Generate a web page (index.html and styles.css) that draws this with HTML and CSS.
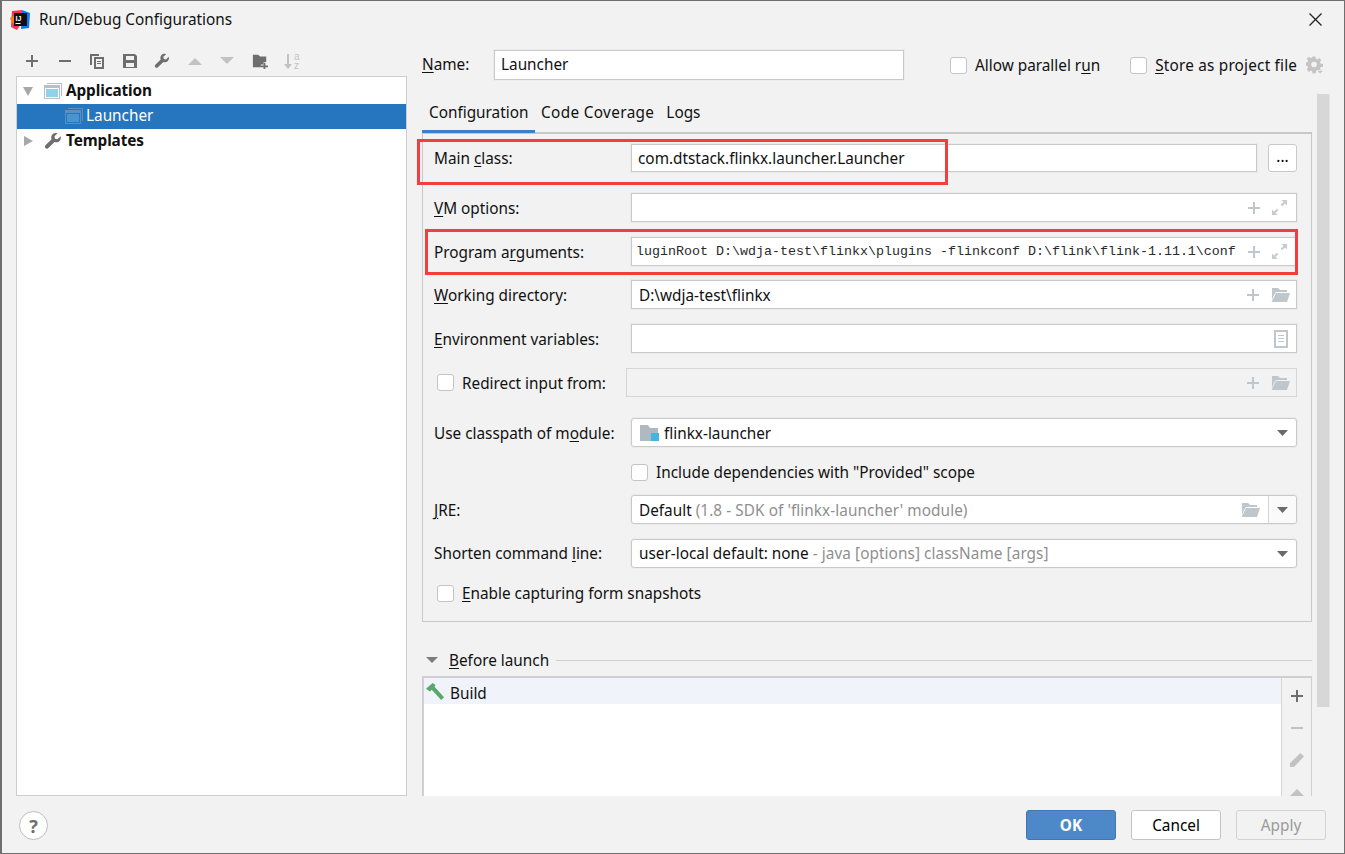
FILE: index.html
```html
<!DOCTYPE html>
<html lang="en">
<head>
<meta charset="utf-8">
<title>Run/Debug Configurations</title>
<link rel="stylesheet" href="styles.css">
</head>
<body>
<svg class="sprite" width="0" height="0" aria-hidden="true">
  <symbol id="i-plus" viewBox="0 0 16 16"><path d="M7 2h2v5h5v2H9v5H7V9H2V7h5z"/></symbol>
  <symbol id="i-minus" viewBox="0 0 16 16"><path d="M2 7h12v2H2z"/></symbol>
  <symbol id="i-expand" viewBox="0 0 18 18"><path d="M11 1h6v6l-2.2-2.2-3 3-1.6-1.6 3-3zM7 17H1v-6l2.2 2.2 3-3 1.6 1.6-3 3z"/></symbol>
  <symbol id="i-folder" viewBox="0 0 20 16"><path d="M2 1h6l2 2h7v2H6L4 8 2 13zM6 6h14l-3 9H1.500z"/></symbol>
  <symbol id="i-wrench" viewBox="0 0 18 18"><path d="M16.600 4.200 13.500 7.200 11 6.800 10.500 4.300 13.600 1.300C11.500.5 9 1.100 7.900 3 7 4.500 7 6 7.600 7.200L1.500 13.300C.7 14.100.7 15.300 1.500 16.100S3.600 16.900 4.400 16.100L10.500 10C12.200 10.700 14.200 10.300 15.600 8.900 16.800 7.700 17.100 5.800 16.600 4.200Z"/></symbol>
  <symbol id="i-window" viewBox="0 0 18 18"><path class="w-back" d="M3 1h15v13h-1V2H3z"/><path class="w-frame" d="M0 3h16v14H0zM1 6v10h14V6z"/><path class="w-fill" d="M2 7h12v8H2z"/></symbol>
</svg>

<div class="dialog">
  <header class="titlebar">
    <svg class="logo" viewBox="0 0 20 20" aria-hidden="true">
      <path fill="#fe315d" d="M2 1 12 0l3 8-8 12-6-3z"/>
      <path fill="#087cfa" d="M12 0l8 3-1 15-8 1z"/>
      <path fill="#f97a12" d="M0 8l5-3 2 10-5-2z"/>
      <rect x="4" y="3" width="13" height="13" fill="#111"/>
      <text x="5.500" y="10.500" class="logo-text">IJ</text>
      <rect x="5.500" y="13" width="5" height="1" fill="#fff"/>
    </svg>
    <span class="title">Run/Debug Configurations</span>
    <svg class="close" viewBox="0 0 13 13" aria-hidden="true"><path d="M.5.500l12 12M12.500.500l-12 12"/></svg>
  </header>

  <main class="main">
    <aside class="left">
      <div class="toolbar">
        <svg class="tool dark"><use href="#i-plus"/></svg>
        <svg class="tool dark"><use href="#i-minus"/></svg>
        <svg class="tool dark" viewBox="0 0 16 16"><path d="M1 1h9v2H3v9H1zM5 4h10v12H5zM7 6v8h6V6zM8 8h4v1H8zM8 10h4v1H8z" fill-rule="evenodd"/></svg>
        <svg class="tool dark" viewBox="0 0 16 16"><path fill-rule="evenodd" d="M1 1h12l2 2v12H1zM4 3v4h8V3zM4 10v4h8v-4z"/></svg>
        <svg class="tool dark"><use href="#i-wrench"/></svg>
        <svg class="tool faint" viewBox="0 0 16 16"><path d="M1 12 8 5l7 7z"/></svg>
        <svg class="tool faint" viewBox="0 0 16 16"><path d="M1 4h14l-7 7z"/></svg>
        <svg class="tool dark" viewBox="0 0 18 18"><path d="M1 2h6l2 2h7v6h-3v3h-3v3H1z"/><path d="M13 11h2v3h3v2h-3v2h-2v-2h-3v-2h3z"/></svg>
        <svg class="tool faint sort" viewBox="0 0 18 18"><path d="M3 2h2v10h3l-4 5-4-5h3z"/><text x="10" y="8" class="sort-text">a</text><text x="10" y="16.500" class="sort-text">z</text></svg>
      </div>
      <div class="tree">
        <div class="node">
          <svg class="twisty" viewBox="0 0 12 12"><path d="M1 2h10L6 11z"/></svg>
          <svg class="node-icon"><use href="#i-window"/></svg>
          <b>Application</b>
        </div>
        <div class="node selected">
          <svg class="node-icon child"><use href="#i-window"/></svg>
          <span>Launcher</span>
        </div>
        <div class="node">
          <svg class="twisty" viewBox="0 0 12 12"><path d="M2 1v10l9-5z"/></svg>
          <svg class="node-icon wrench"><use href="#i-wrench"/></svg>
          <b>Templates</b>
        </div>
      </div>
    </aside>

    <section class="right">
      <div class="name-row">
        <label class="name-label"><u>N</u>ame:</label>
        <div class="field name-field">Launcher</div>
        <span class="check allow"></span><span class="check-text">Allow parallel r<u>u</u>n</span>
        <span class="check store"></span><span class="check-text store-text"><u>S</u>tore as project file</span>
        <svg class="gear" viewBox="0 0 18 18"><path fill-rule="evenodd" d="M7 0h3l.5 2.500 1.500.6L14 1.700l2.200 2.200-1.400 2 .6 1.500 2.600.5v3l-2.600.5-.6 1.500 1 1.500H11.500l-.5.600-1 3H7l-.5-2.500-1.500-.6-2 1.400L.8 13.500l1.400-2-.6-1.500L-.9 9.500v-3l2.500-.5.600-1.500-1.400-2L3 .3l2 1.400 1.500-.6zM8.500 5.500a3 3 0 1 0 0 6 3 3 0 0 0 0-6z"/><path d="M12 15h6l-3 3z"/></svg>
      </div>

      <div class="scroll-area">
        <div class="form-col">
          <nav class="tabs">
            <span class="tab active">Configuration</span>
            <span class="tab coverage">Code Coverage</span>
            <span class="tab">Logs</span>
          </nav>

          <div class="panel">
            <div class="row">
              <label class="lbl">Main <u>c</u>lass:</label>
              <div class="field grow main-field">com.dtstack.flinkx.launcher.Launcher</div>
              <button class="dots">...</button>
            </div>
            <div class="row mt21 tall">
              <label class="lbl"><u>V</u>M options:</label>
              <div class="field grow">
                <span class="spacer"></span>
                <svg class="fi plus"><use href="#i-plus"/></svg>
                <svg class="fi exp"><use href="#i-expand"/></svg>
              </div>
            </div>
            <div class="row mt15 tall">
              <label class="lbl">Program a<u>r</u>guments:</label>
              <div class="field grow">
                <span class="mono">luginRoot D:\wdja-test\flinkx\plugins -flinkconf D:\flink\flink-1.11.1\conf</span>
                <svg class="fi plus"><use href="#i-plus"/></svg>
                <svg class="fi exp"><use href="#i-expand"/></svg>
              </div>
            </div>
            <div class="row mt14 tall">
              <label class="lbl"><u>W</u>orking directory:</label>
              <div class="field grow">
                <span class="spacer">D:\wdja-test\flinkx</span>
                <svg class="fi plus"><use href="#i-plus"/></svg>
                <svg class="fi fold"><use href="#i-folder"/></svg>
              </div>
            </div>
            <div class="row mt15 tall">
              <label class="lbl"><u>E</u>nvironment variables:</label>
              <div class="field grow">
                <span class="spacer"></span>
                <svg class="fi doc" viewBox="0 0 14 18"><path fill-rule="evenodd" d="M0 0h14v18H0zM2 2v14h10V2zM4 5h6v1H4zM4 8h6v1H4zM4 11h6v1H4z"/></svg>
              </div>
            </div>
            <div class="row mt15 tall">
              <span class="check-lbl"><span class="check"></span>Redirect input from:</span>
              <div class="field grow disabled">
                <span class="spacer"></span>
                <svg class="fi plus"><use href="#i-plus"/></svg>
                <svg class="fi fold"><use href="#i-folder"/></svg>
              </div>
            </div>
            <div class="row mt21 tall">
              <label class="lbl">Use classpath of m<u>o</u>dule:</label>
              <div class="field grow combo">
                <svg class="module" viewBox="0 0 19 16"><path fill="#afb9c1" d="M0 0h8l2 3h8v13H0z"/><rect x="11" y="8" width="8" height="8" fill="#40b6e0"/></svg>
                <span class="spacer">flinkx-launcher</span>
                <svg class="arrow" viewBox="0 0 11 6"><path d="M0 0h11L5.500 6z"/></svg>
              </div>
            </div>
            <div class="row mt16 short">
              <span class="lbl"></span>
              <span class="check-inline"><span class="check"></span>Include dependencies with "Provided" scope</span>
            </div>
            <div class="row mt14 tall">
              <label class="lbl"><u>J</u>RE:</label>
              <div class="field grow combo split">
                <span class="spacer">Default <span class="muted">(1.8 - SDK of 'flinkx-launcher' module)</span></span>
                <svg class="fi fold"><use href="#i-folder"/></svg>
                <span class="split-btn"><svg class="arrow" viewBox="0 0 11 6"><path d="M0 0h11L5.500 6z"/></svg></span>
              </div>
            </div>
            <div class="row mt15 tall nudge">
              <label class="lbl">Shorten command <u>l</u>ine:</label>
              <div class="field grow combo">
                <span class="spacer">user-local default: none <span class="muted">- java [options] className [args]</span></span>
                <svg class="arrow" viewBox="0 0 11 6"><path d="M0 0h11L5.500 6z"/></svg>
              </div>
            </div>
            <div class="row mt16 short">
              <span class="check-lbl wide"><span class="check"></span><span><u>E</u>nable capturing form snapshots</span></span>
            </div>
          </div>

          <div class="before-head">
            <svg class="twisty small" viewBox="0 0 12 12"><path d="M0 3h12L6 9z"/></svg>
            <span><u>B</u>efore launch</span>
            <span class="rule"></span>
          </div>
          <div class="before-list">
            <div class="items">
              <div class="item">
                <svg class="hammer" viewBox="0 0 20 20"><path fill="#59a869" d="M0 6 7 0l3 2-1 2 10 11-3 3L6 7 4 9z"/></svg>
                <span class="item-text">Build</span>
              </div>
            </div>
            <div class="side-tools">
              <svg class="side dark"><use href="#i-plus"/></svg>
              <svg class="side faint"><use href="#i-minus"/></svg>
              <svg class="side faint" viewBox="0 0 16 16"><path d="M11.500 1l3.500 3.500L5 15H1v-4z"/></svg>
              <svg class="side faint" viewBox="0 0 16 16"><path d="M1 12 8 5l7 7z"/></svg>
            </div>
          </div>
        </div>
        <div class="scrollbar"></div>
      </div>
    </section>
  </main>

  <footer class="footer">
    <button class="help">?</button>
    <span class="spacer"></span>
    <button class="btn ok">OK</button>
    <button class="btn">Cancel</button>
    <button class="btn off">Apply</button>
  </footer>

  <div class="mark mark-main"></div>
  <div class="mark mark-args"></div>
</div>
</body>
</html>
```

FILE: styles.css
```css
* { box-sizing: border-box; }
html, body { margin: 0; height: 100%; }
body { font-family: "Noto Sans", "Open Sans", sans-serif; font-size: 15.33px; color: #111; background: #f2f2f2; overflow: hidden; }
.sprite { position: absolute; }
u { text-underline-offset: 2px; text-decoration-thickness: 1px; }

.dialog { position: relative; width: 1345px; height: 854px; display: flex; flex-direction: column; background: #f2f2f2; border: 1px solid #6f6f6f; border-left-width: 2px; }

.titlebar { height: 37px; flex: none; display: flex; align-items: center; padding-left: 8px; }
.logo { width: 20px; height: 20px; }
.logo-text { font: bold 7px "Liberation Sans", sans-serif; fill: #fff; }
.title { margin-left: 9px; flex: 1; padding-bottom: 2px; }
.close { width: 13px; height: 13px; margin-right: 22px; fill: none; stroke: #222; stroke-width: 1.300; }

.main { flex: 1; min-height: 0; display: flex; }

.left { width: 405px; flex: none; padding-left: 14px; display: flex; flex-direction: column; }
.toolbar { height: 30px; margin-top: 8px; flex: none; display: flex; align-items: center; padding-left: 8px; gap: 16.500px; }
.tool { width: 16px; height: 16px; flex: none; }
.tool.sort { width: 18px; height: 18px; }
.dark { fill: #6e6e6e; }
.faint { fill: #c2c2c2; }
.sort-text { font: 10px "Liberation Sans", sans-serif; }
.tree { flex: 1; background: #fff; border: 1px solid #cdcdcd; padding-top: 2px; }
.node { height: 25px; display: flex; align-items: center; padding: 0 0 2px 5px; position: relative; }
.node b, .node span { padding-bottom: 2px; }
.twisty { width: 12px; height: 12px; fill: #a8a8a8; flex: none; }
.node-icon { width: 18px; height: 18px; margin-left: 10px; margin-right: 4px; flex: none; }
.w-back { fill: #b9bfc6; }
.w-frame { fill: #b9bfc6; fill-rule: evenodd; }
.w-fill { fill: #8fd2ec; }
.node.selected { background: #2675bf; color: #fff; padding-left: 48px; }
.node-icon.child { margin-left: 0; margin-right: 3px; opacity: .35; }
.node-icon.child .w-fill { fill: #2a8bd8; }
.node-icon.wrench { fill: #6e6e6e; }
.node b { font-weight: 700; letter-spacing: -.1px; }

.right { flex: 1; min-width: 0; padding-left: 15px; padding-top: 12px; display: flex; flex-direction: column; }
.name-row { height: 30px; flex: none; display: flex; align-items: center; }
.name-label { width: 72px; padding-bottom: 2px; }
.field { background: #fff; border: 1px solid #c9c9c9; box-shadow: 0 0 0 1px #ebebeb; display: flex; align-items: center; padding-left: 6px; height: 100%; }
.name-field { width: 410px; margin-right: 46px; padding-bottom: 2px; }
.check { display: inline-block; width: 17px; height: 17px; flex: none; background: #fff; border: 1px solid #c4c4c4; border-radius: 3px; }
.check-text { margin-left: 8px; white-space: pre; }
.store-text { letter-spacing: .2px; }
.check.store { margin-left: 30px; }
.gear { width: 17px; height: 18px; margin-left: 9px; fill: #c4c4c4; }

.scroll-area { flex: 1; min-height: 0; margin-top: 14px; display: flex; overflow: hidden; }
.form-col { width: 890px; flex: none; padding-top: 6px; }
.scrollbar { width: 13px; height: 613px; margin-left: 5px; background: #d7d7d7; border-right: 1px solid #e3e3e3; }

.tabs { height: 32px; display: flex; }
.tab { padding: 0 6px; line-height: 24px; height: 32px; }
.tab.active { width: 113px; padding-left: 7px; border-bottom: 3px solid #3f7fc8; position: relative; z-index: 1; margin-bottom: -1px; height: 33px; }
.tab.coverage { letter-spacing: .35px; }

.panel { border: 1px solid #c8c8c8; border-top-width: 2px; padding: 10px 14px 20px 11px; height: 490px; }
.row { display: flex; align-items: center; height: 28px; }
.row.tall { height: 29px; }
.row.short { height: 18px; }
.mt14 { margin-top: 14px; }
.mt15 { margin-top: 15px; }
.mt16 { margin-top: 16px; }
.mt21 { margin-top: 21px; }
.lbl { width: 197px; flex: none; }
.nudge .lbl, .nudge .spacer { padding-bottom: 2px; }
.grow { flex: 1; min-width: 0; }
.main-field { margin-right: 11px; }
.dots { width: 29px; height: 28px; flex: none; background: #fff; border: 1px solid #c9c9c9; border-radius: 3px; font: inherit; padding: 0 0 5px; }
.spacer { flex: 1; min-width: 0; }
.field .spacer { padding-left: 1px; }
.mono { flex: 1; font: 13.330px/1 "Liberation Mono", monospace; white-space: pre; overflow: hidden; margin-left: -2px; color: #2a2a2a; }
.fi { flex: none; fill: #c0c7cc; }
.fi.plus { width: 16px; height: 16px; margin-right: 9px; margin-left: 5px; }
.fi.exp { width: 17px; height: 17px; margin-right: 8px; fill: #c7ccd1; }
.fi.fold { width: 20px; height: 16px; margin-right: 6px; }
.fi.doc { width: 14px; height: 18px; margin-right: 8px; }
.disabled { background: #f2f2f2; border-color: #d6d6d6; box-shadow: none; }
.check-lbl { width: 192px; flex: none; display: flex; align-items: center; gap: 8px; padding-left: 3px; }
.check-lbl.wide { width: auto; }
.check-inline { display: flex; align-items: center; gap: 8px; }
.combo { border-radius: 3px; padding-right: 0; }
.module { width: 19px; height: 16px; margin-left: 2px; margin-right: 4px; flex: none; }
.arrow { width: 11px; height: 6px; margin-right: 8px; fill: #6a6a6a; flex: none; }
.muted { color: #8f8f8f; letter-spacing: .07px; }
.split .fi.fold { margin-right: 8px; }
.split-btn { width: 28px; height: 100%; flex: none; display: flex; align-items: center; justify-content: center; background: #fafafa; border-left: 1px solid #d4d4d4; border-radius: 0 3px 3px 0; }
.split-btn .arrow { margin: 0; }

.before-head { height: 20px; margin-top: 28px; display: flex; align-items: center; padding-left: 4px; }
.twisty.small { fill: #7c7c7c; margin-right: 11px; }
.rule { flex: 1; height: 1px; background: #cfcfcf; margin-left: 7px; }
.before-list { height: 160px; margin-top: 6px; border-top: 2px solid #cfcfcf; border-left: 2px solid #cfcfcf; border-right: 1px solid #cfcfcf; display: flex; background: #fff; }
.items { flex: 1; }
.item { height: 26px; background: #f0f3f9; display: flex; align-items: center; gap: 5px; padding: 2px 0 0 2px; }
.item-text { padding-top: 2px; }
.hammer { width: 19px; height: 19px; flex: none; }
.side-tools { width: 30px; flex: none; background: #f2f2f2; border-left: 1px solid #d6d6d6; display: flex; flex-direction: column; align-items: center; gap: 16px; padding-top: 10px; }
.side { width: 16px; height: 16px; flex: none; }

.footer { height: 57px; flex: none; display: flex; align-items: flex-start; padding: 14px 18px 0 17px; gap: 15px; }
.help { width: 29px; height: 29px; margin-top: 1px; border: 1px solid #bdbdbd; border-radius: 50%; background: #fff; color: #6e6e6e; font: 700 18px/1 "Noto Sans", sans-serif; padding: 0; }
.btn { width: 90px; height: 30px; font: inherit; background: #fff; color: #000; border: 1px solid #c4c4c4; border-radius: 3px; padding: 0; }
.btn.ok { background: #4d88c8; border-color: #3f75b0; color: #fff; font-weight: 700; }
.btn.off { background: #f2f2f2; color: #9a9a9a; border-color: #d2d2d2; }

.mark { position: absolute; border: 3px solid #f33e3e; }
.mark-main { left: 415px; top: 138px; width: 531px; height: 46px; }
.mark-args { left: 423px; top: 228px; width: 873px; height: 46px; }
```
